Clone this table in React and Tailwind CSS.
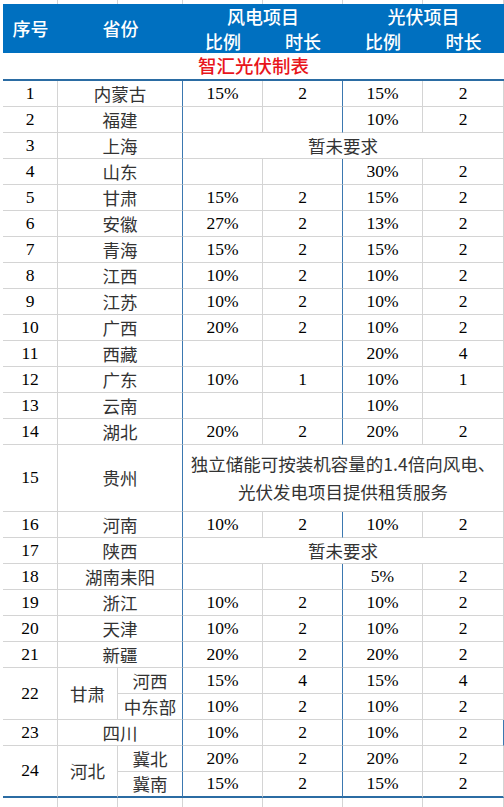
const CJK = "font-['Noto_Sans_CJK_SC',sans-serif]";

function Cell({ children, className = '', blue, cjk, bottom, tall }) {
  const right = blue ? 'border-r-[#3b78b0]' : 'border-r-[#d4d4d4]';
  const bot = bottom ? 'border-b-2 border-b-[#2b6ca3]' : 'border-b border-b-[#d4d4d4]';
  const font = cjk
    ? "font-['Noto_Sans_CJK_SC',sans-serif] text-[17.5px] text-[#333]"
    : "font-['Liberation_Serif',serif] text-[17.5px] text-black";
  const lead = tall ? 'flex-col leading-[28px]' : 'leading-none';
  return (
    <div className={`flex items-center justify-center border-r ${lead} ${right} ${bot} ${font} ${className}`}>
      {children}
    </div>
  );
}

function Row({ n, name, w1, w2, s1, s2 }) {
  return (
    <>
      <Cell>{n}</Cell>
      <Cell cjk blue className="col-span-2">{name}</Cell>
      <Cell>{w1}</Cell>
      <Cell blue>{w2}</Cell>
      <Cell>{s1}</Cell>
      <Cell>{s2}</Cell>
    </>
  );
}

function NoReq({ n, name }) {
  return (
    <>
      <Cell>{n}</Cell>
      <Cell cjk blue className="col-span-2">{name}</Cell>
      <Cell cjk className="col-span-4">暂未要求</Cell>
    </>
  );
}

const top = [
  [1, '内蒙古', '15%', '2', '15%', '2'],
  [2, '福建', '', '', '10%', '2'],
];
const mid = [
  [4, '山东', '', '', '30%', '2'],
  [5, '甘肃', '15%', '2', '15%', '2'],
  [6, '安徽', '27%', '2', '13%', '2'],
  [7, '青海', '15%', '2', '15%', '2'],
  [8, '江西', '10%', '2', '10%', '2'],
  [9, '江苏', '10%', '2', '10%', '2'],
  [10, '广西', '20%', '2', '10%', '2'],
  [11, '西藏', '', '', '20%', '4'],
  [12, '广东', '10%', '1', '10%', '1'],
  [13, '云南', '', '', '10%', ''],
  [14, '湖北', '20%', '2', '20%', '2'],
];
const low = [
  [18, '湖南耒阳', '', '', '5%', '2'],
  [19, '浙江', '10%', '2', '10%', '2'],
  [20, '天津', '10%', '2', '10%', '2'],
  [21, '新疆', '20%', '2', '20%', '2'],
];

const strip = [0, 1, 2, 3, 4, 5, 6];

export default function App() {
  const row = (r) => <Row key={r[0]} n={r[0]} name={r[1]} w1={r[2]} w2={r[3]} s1={r[4]} s2={r[5]} />;
  return (
    <div className="w-[504px] h-[807px] overflow-hidden bg-white">
      <div className="ml-[3px] grid grid-cols-[55px_60px_65px_80px_80px_80px_81px] grid-rows-[4px_24px_25px_28px_repeat(14,26px)_67px_repeat(11,26px)_9px]">
        {strip.map((i) => (
          <div key={'t' + i} className="border-r border-r-[#d4d4d4]" />
        ))}

        {/* header */}
        <div className={`row-span-2 flex items-center justify-center bg-[#0070c0] text-white text-[18px] font-medium ${CJK}`}>序号</div>
        <div className={`row-span-2 col-span-2 flex items-center justify-center bg-[#0070c0] text-white text-[18px] font-medium ${CJK}`}>省份</div>
        <div className={`col-span-2 flex items-center justify-center bg-[#0070c0] text-white text-[18px] font-medium leading-none ${CJK}`}>风电项目</div>
        <div className={`col-span-2 flex items-center justify-center bg-[#0070c0] text-white text-[18px] font-medium leading-none ${CJK}`}>光伏项目</div>
        <div className={`flex items-center justify-center bg-[#0070c0] text-white text-[18px] font-medium leading-none ${CJK}`}>比例</div>
        <div className={`flex items-center justify-center bg-[#0070c0] text-white text-[18px] font-medium leading-none ${CJK}`}>时长</div>
        <div className={`flex items-center justify-center bg-[#0070c0] text-white text-[18px] font-medium leading-none ${CJK}`}>比例</div>
        <div className={`flex items-center justify-center bg-[#0070c0] text-white text-[18px] font-medium leading-none ${CJK}`}>时长</div>

        <div className={`col-span-7 flex items-center justify-center border-b-2 border-b-[#2b6ca3] text-[18.5px] font-medium text-[#e8151b] ${CJK}`}>
          智汇光伏制表
        </div>

        {top.map(row)}
        <NoReq n={3} name="上海" />
        {mid.map(row)}

        <Cell>15</Cell>
        <Cell cjk blue className="col-span-2">贵州</Cell>
        <Cell cjk tall className="col-span-4">
          <span>独立储能可按装机容量的1.4倍向风电、</span>
          <span>光伏发电项目提供租赁服务</span>
        </Cell>

        {row([16, '河南', '10%', '2', '10%', '2'])}
        <NoReq n={17} name="陕西" />
        {low.map(row)}

        <Cell className="row-span-2">22</Cell>
        <Cell cjk className="row-span-2">甘肃</Cell>
        <Cell cjk blue>河西</Cell>
        <Cell>15%</Cell>
        <Cell blue>4</Cell>
        <Cell>15%</Cell>
        <Cell>4</Cell>
        <Cell cjk blue>中东部</Cell>
        <Cell>10%</Cell>
        <Cell blue>2</Cell>
        <Cell>10%</Cell>
        <Cell>2</Cell>

        <Cell>23</Cell>
        <Cell cjk blue className="col-span-2">四川</Cell>
        <Cell>10%</Cell>
        <Cell blue>2</Cell>
        <Cell>10%</Cell>
        <Cell blue>2</Cell>

        <Cell bottom className="row-span-2">24</Cell>
        <Cell bottom cjk className="row-span-2">河北</Cell>
        <Cell cjk blue>冀北</Cell>
        <Cell>20%</Cell>
        <Cell blue>2</Cell>
        <Cell>20%</Cell>
        <Cell>2</Cell>
        <Cell bottom cjk blue>冀南</Cell>
        <Cell bottom>15%</Cell>
        <Cell bottom blue>2</Cell>
        <Cell bottom>15%</Cell>
        <Cell bottom>2</Cell>

        {strip.map((i) => (
          <div key={'b' + i} className="border-r border-r-[#d4d4d4]" />
        ))}
      </div>
    </div>
  );
}
